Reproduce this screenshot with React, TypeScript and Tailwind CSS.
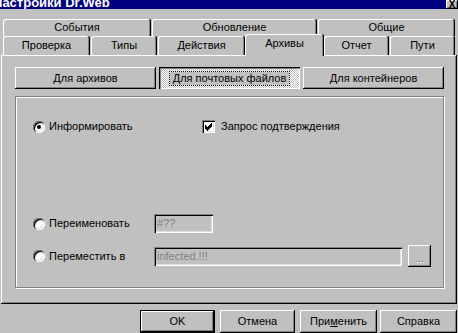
import React from "react";

// Win95-style bevels
const raised =
  "shadow-[inset_-1px_-1px_#000,inset_1px_1px_#fff,inset_-2px_-2px_#808080]";
const sunken =
  "shadow-[inset_1px_1px_#808080,inset_2px_2px_#000,inset_-1px_-1px_#fff,inset_-2px_-2px_#dfdfdf]";
const tabEdge =
  "shadow-[inset_-1px_0_#000,inset_1px_1px_#fff,inset_-2px_0_#808080]";

const Tab = ({
  label,
  w,
  selected,
  gap,
}: {
  label: string;
  w: string;
  selected?: boolean;
  gap?: boolean;
}) => {
  if (selected) {
    return (
      <div
        className={`${w} relative top-[1px] z-10 h-[22px] self-end rounded-t-[2px] bg-[#c0c0c0] pb-[3px] flex items-center justify-center ${tabEdge}`}
      >
        {label}
      </div>
    );
  }
  return (
    <div
      className={`${w} ${gap ? "mr-[1px]" : ""} h-full rounded-t-[2px] flex items-center justify-center ${tabEdge}`}
    >
      {label}
    </div>
  );
};

const Radio = ({ on }: { on?: boolean }) => (
  <div
    className={`w-[12px] h-[12px] shrink-0 rounded-full bg-white flex items-center justify-center ${sunken}`}
  >
    {on && <div className="w-[4px] h-[4px] rounded-full bg-black" />}
  </div>
);

const App = () => {
  return (
    <div
      className="w-[458px] h-[333px] overflow-hidden bg-[#c0c0c0] text-[11px] text-black flex flex-col"
      style={{ fontFamily: '"Liberation Sans", Arial, sans-serif' }}
    >
      {/* заголовок, срезан сверху */}
      <div className="h-[9px] bg-[#000080] flex items-start justify-between overflow-hidden">
        <div className="ml-[-7px] mt-[-4px] text-white font-bold text-[13px] leading-[13px] whitespace-nowrap">
          Настройки Dr.Web
        </div>
        <div
          className={`w-[12px] h-[9px] bg-[#c0c0c0] flex items-end justify-center text-[10px] font-bold leading-[9px] ${raised}`}
        >
          X
        </div>
      </div>

      {/* вкладки */}
      <div className="mt-[10px] h-[18px] pl-[3px] flex">
        <Tab label="События" w="w-[148px]" gap />
        <Tab label="Обновление" w="w-[165px]" gap />
        <Tab label="Общие" w="w-[137px]" />
      </div>
      <div className="h-[19px] pl-[3px] flex items-end">
        <Tab label="Проверка" w="w-[87px]" gap />
        <Tab label="Типы" w="w-[66px]" gap />
        <Tab label="Действия" w="w-[87px]" />
        <Tab label="Архивы" w="w-[79px]" selected />
        <Tab label="Отчет" w="w-[65px]" gap />
        <Tab label="Пути" w="w-[65px]" />
      </div>

      {/* панель */}
      <div
        className={`ml-[1px] w-[456px] h-[249px] shrink-0 pt-[12px] pl-[14px] ${raised}`}
      >
        <div className="flex gap-[3px] h-[22px]">
          <div className={`w-[141px] flex items-center justify-center ${raised}`}>
            Для архивов
          </div>
          <div className="w-[141px] flex items-center justify-center bg-[repeating-conic-gradient(#fff_0_25%,#c0c0c0_0_50%)] bg-[length:2px_2px] shadow-[inset_1px_1px_#000,inset_2px_2px_#808080,inset_-1px_-1px_#fff]">
            <span className="bg-[#c0c0c0] px-[3px] leading-[13px] outline outline-1 outline-dotted outline-black">
              Для почтовых файлов
            </span>
          </div>
          <div className={`w-[141px] flex items-center justify-center ${raised}`}>
            Для контейнеров
          </div>
        </div>

        {/* группа */}
        <div className="mt-[7px] w-[429px] h-[192px] border border-[#808080] shadow-[inset_1px_1px_#fff,1px_1px_#fff] pl-[17px] pt-[23px] flex flex-col">
          <div className="h-[13px] flex items-center">
            <div className="w-[169px] flex items-center gap-[4px]">
              <Radio on />
              <span>Информировать</span>
            </div>
            <div className={`w-[13px] h-[13px] bg-white flex items-center justify-center ${sunken}`}>
              <svg width="9" height="9" viewBox="0 0 9 9">
                <path
                  d="M1 3.5 L3.5 6 L8 1.5 M1 4.5 L3.5 7 L8 2.5 M1 5.5 L3.5 8 L8 3.5"
                  stroke="#000"
                  strokeWidth="1"
                  fill="none"
                  shapeRendering="crispEdges"
                />
              </svg>
            </div>
            <span className="ml-[6px]">Запрос подтверждения</span>
          </div>

          <div className="mt-[81px] h-[19px] flex items-center">
            <div className="w-[121px] flex items-center gap-[4px]">
              <Radio />
              <span>Переименовать</span>
            </div>
            <div className={`w-[59px] h-[19px] pl-[3px] flex items-center text-[#808080] ${sunken}`}>
              #??
            </div>
          </div>

          <div className="mt-[12px] h-[22px] flex items-center">
            <div className="w-[121px] flex items-center gap-[4px]">
              <Radio />
              <span>Переместить в</span>
            </div>
            <div className={`w-[248px] h-[19px] pl-[3px] flex items-center text-[#808080] ${sunken}`}>
              infected.!!!
            </div>
            <div
              className={`ml-[6px] w-[23px] h-[22px] flex items-end justify-center pb-[5px] text-[#808080] leading-[8px] [text-shadow:1px_1px_#fff] ${raised}`}
            >
              ...
            </div>
          </div>
        </div>
      </div>

      {/* кнопки внизу */}
      <div className="mt-[6px] pr-[1px] flex justify-end">
        <div className="w-[75px] h-[23px] shrink-0 flex items-center justify-center shadow-[inset_0_0_0_1px_#000,inset_-2px_-2px_#000,inset_2px_2px_#fff,inset_-3px_-3px_#808080]">
          OK
        </div>
        <div className={`ml-[5px] w-[75px] h-[23px] shrink-0 flex items-center justify-center ${raised}`}>
          Отмена
        </div>
        <div className={`ml-[5px] w-[77px] h-[23px] shrink-0 flex items-center justify-center ${raised}`}>
          <span>
            При<u>м</u>енить
          </span>
        </div>
        <div className={`ml-[3px] w-[77px] h-[23px] shrink-0 flex items-center justify-center ${raised}`}>
          Справка
        </div>
      </div>
    </div>
  );
};

export default App;
